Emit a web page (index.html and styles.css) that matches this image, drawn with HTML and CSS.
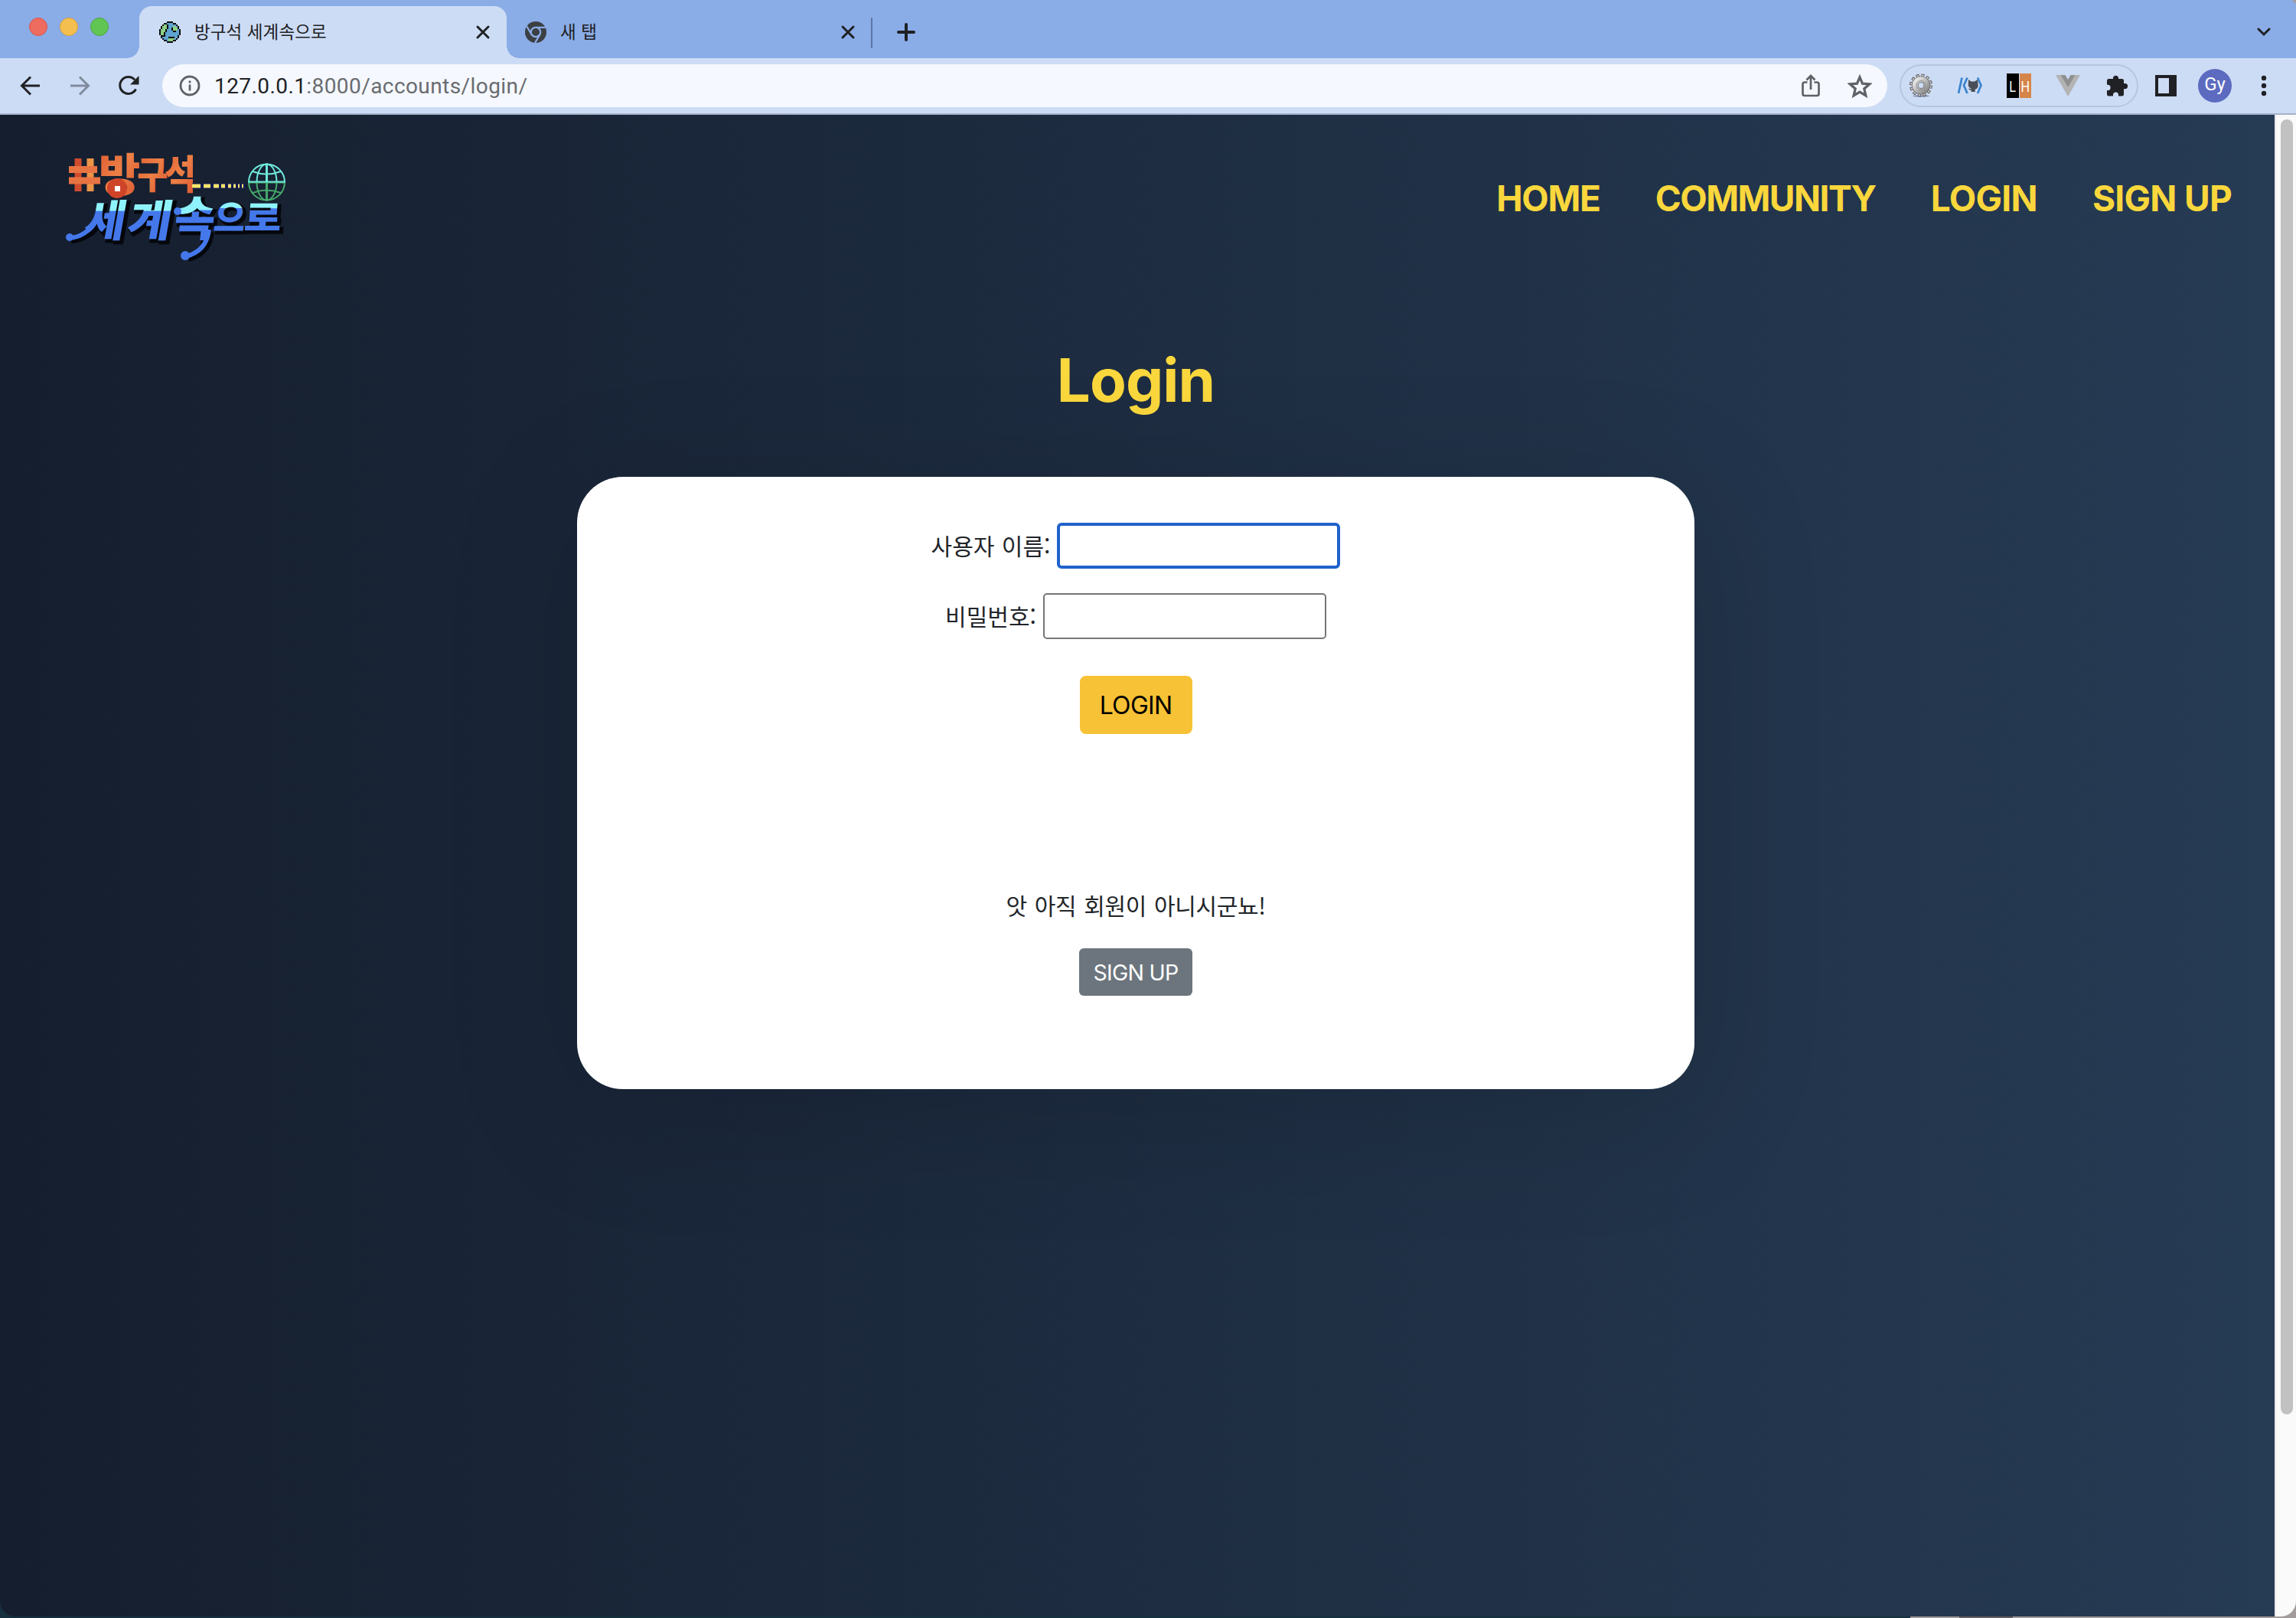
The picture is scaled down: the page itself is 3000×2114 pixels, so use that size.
FILE: index.html
```html
<!DOCTYPE html>
<html lang="ko">
<head>
<meta charset="utf-8">
<title>방구석 세계속으로</title>
<link rel="stylesheet" href="styles.css">
</head>
<body>
<div class="window">
  <div class="tabstrip">
    <div class="lights"><i class="light red"></i><i class="light amber"></i><i class="light green"></i></div>
    <div class="tab active">
      <svg class="favicon" viewBox="0 0 28 28" shape-rendering="crispEdges"><path d="M10 0h8v2h4v2h2v2h2v4h2v8h-2v4h-2v2h-2v2h-4v2h-8v-2H6v-2H4v-2H2v-4H0v-8h2V6h2V4h2V2h4z" fill="#0b0d10"/><path d="M10 2h8v2h4v2h2v4h2v8h-2v4h-2v2h-4v2h-8v-2H6v-2H4v-4H2v-8h2V6h2V4h4z" fill="#5fa3d0"/><path d="M6 4h4v6H8v4H6v4H2v-8h2V6h2zM18 6h4v2h2v4h-6zM12 22h8v2h-2v2h-6z" fill="#8fcf84"/><path d="M10 4h2v6h-2v4H8v4H6v-4h2v-4h2zM16 8h2v4h4v2h-4v-2h-2zM12 20h8v2h-8zM6 18h2v2H4v-2z" fill="#0b0d10"/></svg>
      <span class="tab-title">방구석 세계속으로</span>
      <svg class="close" viewBox="0 0 20 20"><path d="M3 3l14 14M17 3L3 17"/></svg>
    </div>
    <div class="tab">
      <svg class="favicon" viewBox="0 0 28 28"><circle cx="14" cy="14" r="14" fill="#3c4043"/><g stroke="#8aace7" stroke-width="2.2" fill="none"><circle cx="14" cy="14" r="6.2"/><path d="M14 7.800h13M8.600 17.100L2 6M19.400 17.100L13 28"/></g></svg>
      <span class="tab-title">새 탭</span>
      <svg class="close" viewBox="0 0 20 20"><path d="M3 3l14 14M17 3L3 17"/></svg>
    </div>
    <i class="divider"></i>
    <svg class="plus" viewBox="0 0 24 24"><path d="M12 2v20M2 12h20"/></svg>
    <svg class="chevron" viewBox="0 0 18 12"><path d="M2 2l7 7 7-7"/></svg>
  </div>

  <div class="toolbar">
    <svg class="tool back" viewBox="0 0 28 28"><path d="M26 14H3M14 2.500L2.500 14 14 25.500"/></svg>
    <svg class="tool forward" viewBox="0 0 28 28"><path d="M2 14h23M14 2.500L25.500 14 14 25.500"/></svg>
    <svg class="tool reload" viewBox="0 0 28 28"><path d="M23.500 18.500A11 11 0 1 1 22 6.200"/><path d="M27.500 1v11.500H16z" fill="#202124" stroke="none"/></svg>
    <div class="omnibox">
      <svg class="info" viewBox="0 0 28 28"><circle cx="14" cy="14" r="12"/><path d="M14 12.500v8M14 7.500v3"/></svg>
      <span class="url"><b>127.0.0.1</b>:8000/accounts/login/</span>
      <svg class="share" viewBox="0 0 24 30"><path d="M7.500 10.500H4a2.500 2.500 0 0 0-2.500 2.500v12.500A2.500 2.500 0 0 0 4 28h16a2.500 2.500 0 0 0 2.500-2.500V13a2.500 2.500 0 0 0-2.500-2.500h-3.500M12 20V2.500M6.500 7.500L12 2l5.500 5.500"/></svg>
      <svg class="star" viewBox="0 0 30 29"><path d="M15 3.500l3.300 7.900 8.600.7-6.500 5.600 2 8.400-7.400-4.500-7.400 4.500 2-8.400-6.500-5.600 8.600-.7z"/></svg>
    </div>
    <div class="extensions">
      <svg class="ext" viewBox="0 0 32 32"><defs><linearGradient id="metal" x1="0" y1="0" x2="1" y2="1"><stop offset="0" stop-color="#ececec"/><stop offset="1" stop-color="#888"/></linearGradient></defs><ellipse cx="16" cy="29.500" rx="11" ry="1.500" fill="#8d99b0"/><circle cx="16" cy="15.500" r="12.500" fill="none" stroke="#606060" stroke-width="5" stroke-dasharray="3.900 2.645"/><circle cx="16" cy="15.500" r="12.300" fill="none" stroke="#c9c9c9" stroke-width="3.400" stroke-dasharray="2.300 4.140" stroke-dashoffset="-.8"/><circle cx="16" cy="15.500" r="7.800" fill="none" stroke="#666" stroke-width="8.600"/><circle cx="16" cy="15.500" r="7.800" fill="none" stroke="url(#metal)" stroke-width="7"/><circle cx="16" cy="15.500" r="6" fill="none" stroke="#949494"/></svg>
      <svg class="ext" viewBox="0 0 32 32"><path d="M5.500 5.500L1 26M12.500 5.500L8 15.500l4.500 10.500M26 5.500l4.500 10L26 26" fill="none" stroke="#3d85cf" stroke-width="2.800"/><path d="M14 8l3.500 2.500h4.500L26 8l.5 6c.6 4-.8 6-3.800 6.800V24h-5v-2.200c-2 .4-3-.8-3.700-2.200 1.200 0 2 1 3.700.6v-.5c-3-.8-4.200-3-3.900-5.700z" fill="#484f58"/></svg>
      <svg class="ext" viewBox="0 0 32 32"><path fill="#000" d="M0 0h16v32H0z"/><path fill="#d5854a" d="M17 0h15v32H17z"/><text transform="translate(3.300 24) scale(.76 1)" class="lh">L</text><text transform="translate(18.600 24) scale(.76 1)" class="lh">H</text></svg>
      <svg class="ext" viewBox="0 0 32 32"><path fill="#b3b3b3" d="M0 2h7l9 15 9-15h7L16 30z"/><path fill="#8f8f8f" d="M6.500 2h6L16 8l3.500-6h6L16 18z"/></svg>
      <svg class="ext" viewBox="0 0 32 32"><path fill="#202124" d="M11 5.500a3.600 3.600 0 0 1 7 0V7h4.500A2.500 2.500 0 0 1 25 9.500V13h1.500a3.600 3.600 0 0 1 0 7.200H25V27a2.500 2.500 0 0 1-2.500 2.500H18V28a3.500 3.500 0 0 0-7 0v1.500H5.500A2.500 2.500 0 0 1 3 27v-5h1a3.600 3.600 0 0 0 0-7.200H3V9.500A2.500 2.500 0 0 1 5.500 7H11z"/></svg>
    </div>
    <svg class="panel" viewBox="0 0 28 28"><path fill="#202124" fill-rule="evenodd" d="M0 0h28v28H0zM4 4v20h14V4z"/></svg>
    <span class="avatar">Gy</span>
    <svg class="menu" viewBox="0 0 8 28"><circle cx="4" cy="4" r="3.200"/><circle cx="4" cy="14" r="3.200"/><circle cx="4" cy="24" r="3.200"/></svg>
  </div>

  <div class="viewport">
    <div class="page">
      <header class="site-header">
        <svg class="logo" viewBox="0 0 320 180">
          <defs>
            <linearGradient id="warm" x1="0" y1="0" x2="1" y2="1"><stop offset="0" stop-color="#e0562e"/><stop offset=".5" stop-color="#ec8046"/><stop offset="1" stop-color="#d9502e"/></linearGradient>
            <linearGradient id="sky" gradientUnits="userSpaceOnUse" x1="0" y1="-48" x2="0" y2="4"><stop offset=".27" stop-color="#8ff3fd"/><stop offset=".29" stop-color="#4478ea"/></linearGradient>
            <linearGradient id="globe" gradientUnits="userSpaceOnUse" x1="0" y1="34" x2="0" y2="82"><stop offset=".5" stop-color="#6ee8da"/><stop offset=".52" stop-color="#45a86b"/></linearGradient>
          </defs>
          <g class="warm-word">
            <g stroke-width="9" fill="none"><path d="M32 27v43" stroke="#cf4b2e"/><path d="M48 27v43" stroke="#ec9448"/><path d="M20 41.500h37M20 56h41" stroke="#e87443"/></g>
            <text transform="translate(59 70)" font-size="59">방</text>
            <text transform="translate(109 66) scale(.9 1)" font-size="49">구</text>
            <text transform="translate(145 67) scale(.86 1)" font-size="52">석</text>
            <circle cx="83" cy="66" r="13" fill="#cf4429"/><path d="M80 63h7v7h-7z" fill="#fff"/>
          </g>
          <path d="M181 63h70" stroke="#101a52" stroke-width="7"/>
          <path d="M181 63h11M196 63h9M209 63h7M219 63h5M228 63h4M235 63h3M241 63h2M246 63h2" stroke="#f7e46a" stroke-width="5"/>
          <g fill="none" stroke="url(#globe)" stroke-width="2"><circle cx="278.500" cy="58" r="23.500"/><ellipse cx="278.500" cy="58" rx="13" ry="23.500"/><path d="M278 34.500h1v47h-1zM255 57.500h47v1h-47zM260 44q18 7 37 0M260 72q18-7 37 0"/></g>
          <g class="cool-shadow" transform="translate(3 3)">
            <text transform="translate(38 129) skewX(-10) scale(1.020 1)" font-size="57">세</text><text transform="translate(94 129) skewX(-10) scale(1.100 1)" font-size="57">계</text><text transform="translate(156 128) skewX(-6) scale(.93 1)" font-size="62">속</text><text transform="translate(208 122) skewX(-6) scale(.86 .9)" font-size="52">으</text><text transform="translate(248 121) skewX(-4) scale(1.020 .86)" font-size="52">로</text>
            <path d="M56 108Q42 130 20 131M203 120Q200 148 173 155M188 88Q178 100 162 96"/>
          </g>
          <g class="cool-word">
            <text transform="translate(38 129) skewX(-10) scale(1.020 1)" font-size="57">세</text><text transform="translate(94 129) skewX(-10) scale(1.100 1)" font-size="57">계</text><text transform="translate(156 128) skewX(-6) scale(.93 1)" font-size="62">속</text><text transform="translate(208 122) skewX(-6) scale(.86 .9)" font-size="52">으</text><text transform="translate(248 121) skewX(-4) scale(1.020 .86)" font-size="52">로</text>
            <path d="M56 108Q42 130 20 131M203 120Q200 148 173 155" fill="none" stroke="#4478ea" stroke-width="6"/><path d="M188 88Q178 100 162 96" fill="none" stroke="#8ff3fd" stroke-width="5"/><circle cx="21" cy="130" r="5"/><circle cx="172" cy="154" r="6"/><circle cx="162" cy="96" r="5"/>
          </g>
        </svg>
        <nav class="nav"><a class="n-home">HOME</a><a class="n-community">COMMUNITY</a><a>LOGIN</a><a>SIGN UP</a></nav>
      </header>
      <main class="main">
        <h1 class="heading">Login</h1>
        <section class="card">
          <form class="form">
            <label class="field"><span class="label">사용자 이름:</span><input class="input focused" type="text"></label>
            <label class="field"><span class="label">비밀번호:</span><input class="input" type="password"></label>
            <button class="btn btn-login" type="button">LOGIN</button>
          </form>
          <p class="notice">앗 아직 회원이 아니시군뇨!</p>
          <a class="btn btn-signup">SIGN UP</a>
        </section>
      </main>
    </div>
    <div class="scrollbar"><div class="thumb"></div></div>
  </div>
</div>
</body>
</html>
```
FILE: styles.css
```css
* { box-sizing: border-box; }
html { background: #17303f; }
body {
  margin: 0;
  width: 3000px;
  height: 2114px;
  overflow: hidden;
  font-family: Inter, "Noto Sans CJK KR", sans-serif;
  background: linear-gradient(90deg, #17303f 2496px, #a39c9c 2496px 2560px, #655f60 2560px 2630px, #a39c9c 2630px);
}
svg { display: block; flex: none; }
.window { height: 2112px; display: flex; flex-direction: column; border-radius: 0 8px 20px 20px; overflow: hidden; }

.tabstrip { height: 76px; flex: none; background: #8aace7; display: flex; align-items: flex-start; }
.lights { display: flex; gap: 16px; padding: 23px 0 0 38px; width: 182px; }
.light { width: 24px; height: 24px; border-radius: 50%; border: 1px solid; }
.red { background: #ee6b5f; border-color: #d8554b; }
.amber { background: #f5bf4f; border-color: #d9a33a; }
.green { background: #61c554; border-color: #4da83e; }
.tab { margin-top: 8px; height: 68px; width: 477px; display: flex; align-items: center; padding: 0 21px 0 24px; position: relative; }
.tab.active { width: 480px; padding-left: 26px; background: #cddcf5; border-radius: 16px 16px 0 0; }
.tab.active::before, .tab.active::after { content: ""; position: absolute; bottom: 0; width: 16px; height: 16px; }
.tab.active::before { left: -16px; background: radial-gradient(circle at 0 0, transparent 15.5px, #cddcf5 16px); }
.tab.active::after { right: -16px; background: radial-gradient(circle at 100% 0, transparent 15.5px, #cddcf5 16px); }
.favicon { width: 28px; height: 28px; margin-right: 18px; }
.tab-title { flex: 1; font: 22.500px/30px "Noto Sans CJK KR", sans-serif; letter-spacing: .1px; color: #202124; white-space: nowrap; padding-bottom: 4px; }
.close { width: 20px; height: 20px; fill: none; stroke: #202124; stroke-width: 3; stroke-linecap: round; }
.divider { width: 2px; height: 40px; margin-top: 23px; margin-left: -1px; background: #5d76a4; }
.plus { width: 24px; height: 24px; margin: 30px 0 0 32px; fill: none; stroke: #202124; stroke-width: 4; stroke-linecap: round; }
.chevron { width: 18px; height: 12px; margin: 36px 33px 0 auto; fill: none; stroke: #202124; stroke-width: 3; stroke-linecap: round; }

.toolbar { height: 74px; flex: none; background: #cddcf5; border-bottom: 2px solid #a5b2cb; display: flex; align-items: center; padding: 0 38px 0 26px; }
.tool { width: 28px; height: 28px; fill: none; stroke: #202124; stroke-width: 3; margin-right: 36px; }
.forward { stroke: #818b9d; }
.reload { margin-right: 30px; }
.omnibox { width: 2254px; height: 56px; border-radius: 28px; background: #f5f8fe; display: flex; align-items: center; padding: 0 20px 0 22px; }
.info { width: 28px; height: 28px; fill: none; stroke: #5f6368; stroke-width: 2.800; margin-right: 18px; }
.url { flex: 1; font: 28px/40px Roboto, sans-serif; letter-spacing: .42px; color: #696c70; padding-top: 2px; }
.url b { font-weight: 400; color: #202124; }
.share { width: 24px; height: 30px; fill: none; stroke: #5f6368; stroke-width: 2.700; margin-right: 36px; }
.star { width: 32px; height: 31px; fill: none; stroke: #5f6368; stroke-width: 3; }
.extensions { width: 312px; height: 56px; margin-left: 16px; border: 2px solid #b8c4e0; border-radius: 28px; display: flex; align-items: center; gap: 32px; padding-left: 10px; }
.ext { width: 32px; height: 32px; }
.lh { font: 21px "Liberation Sans", sans-serif; fill: #fff; }
.panel { width: 28px; height: 28px; margin-left: 22px; }
.avatar { width: 44px; height: 44px; margin-left: 28px; border-radius: 50%; background: #5c6bc0; color: #fff; font: 24px/41px Roboto, sans-serif; text-align: center; }
.menu { width: 8px; height: 28px; margin-left: auto; fill: #202124; }

.viewport { flex: 1; display: flex; min-height: 0; }
.page { flex: 1; background: linear-gradient(to right, #151e2e, #263b54); }
.scrollbar { width: 28px; background: #fafafa; border-left: 2px solid #e8e8e8; padding: 6px 4px 0 6px; }
.thumb { height: 1692px; border-radius: 8px; background: #c1c1c1; }

.site-header { height: 260px; display: flex; justify-content: space-between; align-items: flex-start; padding: 30px 56px 0 70px; }
.logo { width: 320px; height: 180px; }
.warm-word { font-family: "Noto Sans CJK KR", sans-serif; font-weight: 900; fill: url(#warm); }
.cool-word, .cool-shadow { font-family: "Noto Sans CJK KR", sans-serif; font-weight: 900; }
.cool-word { fill: #4478ea; }
.cool-word text { fill: url(#sky); }
.cool-shadow { fill: #05070c; stroke: #05070c; stroke-width: 4px; }
.cool-shadow path { fill: none; stroke-width: 8px; }
.nav { display: flex; gap: 72px; padding-top: 50px; font-size: 46px; line-height: 58px; font-weight: 700; color: #fad73c; white-space: nowrap; letter-spacing: -.7px; }
.n-home { letter-spacing: -1.300px; }
.n-community { letter-spacing: -1.500px; }

.main { display: flex; flex-direction: column; align-items: center; padding-right: 4px; }
.heading { margin: 39px 0 0; font-size: 78px; line-height: 96px; font-weight: 700; color: #fad73c; letter-spacing: -.9px; }
.card { margin-top: 78px; width: 1460px; height: 800px; border-radius: 60px; background: #fff; color: #212529; display: flex; flex-direction: column; align-items: center; padding-top: 60px; box-shadow: 0 32px 180px rgba(0, 0, 0, .14); }
.form { display: flex; flex-direction: column; align-items: center; }
.field { display: flex; align-items: center; height: 60px; margin-bottom: 32px; gap: 9px; white-space: nowrap; }
.label { font: 30px/58px "Noto Sans CJK KR", sans-serif; word-spacing: 1px; padding-bottom: 2px; }
.input { width: 370px; height: 60px; padding: 0; border: 2px solid #767676; border-radius: 5px; background: #fff; }
.focused { border: 4px solid #1f62cb; border-radius: 6px; }
.btn { display: flex; align-items: center; justify-content: center; border: 0; white-space: nowrap; }
.btn-login { margin-top: 16px; width: 147px; height: 76px; border-radius: 8px; background: #f7c235; color: #000; font: 32px/40px Inter, sans-serif; letter-spacing: -.7px; padding: 2px 0 0; }
.notice { margin: 199px 0 0; font: 30px/48px "Noto Sans CJK KR", sans-serif; letter-spacing: -.35px; word-spacing: 2px; }
.btn-signup { margin-top: 33px; width: 148px; height: 62px; border-radius: 6px; background: #6c757d; color: #fff; font-size: 28.500px; letter-spacing: -.7px; }
```
